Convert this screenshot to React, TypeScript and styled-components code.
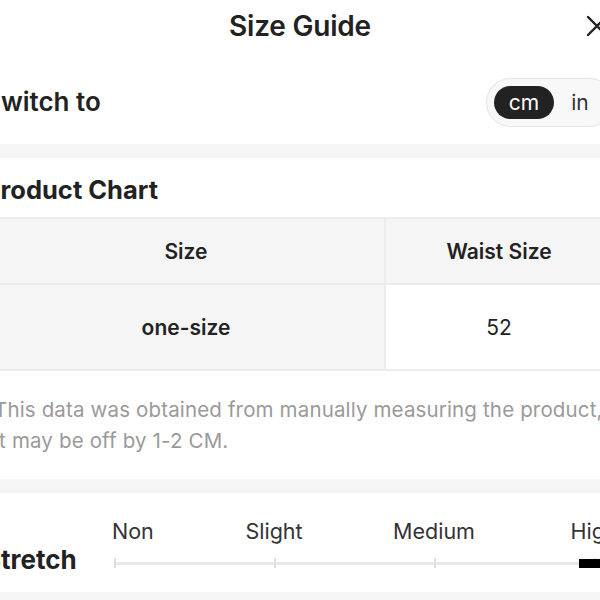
import { createGlobalStyle } from 'styled-components';
import styled from 'styled-components';

const GlobalStyle = createGlobalStyle`
  html, body {
    margin: 0;
    padding: 0;
    background: #ffffff;
    overflow: hidden;
  }
  body {
    font-family: Inter, "Noto Sans", sans-serif;
    color: #222222;
  }
`;

const Page = styled.div`
  width: 628px;
  margin-left: -14px;
  background: #ffffff;
`;

const Header = styled.header`
  display: grid;
  grid-template-columns: 1fr auto 1fr;
  align-items: center;
  height: 52px;
`;

const Title = styled.h1`
  grid-column: 2;
  margin: 0;
  font-size: 28px;
  font-weight: 600;
  letter-spacing: -0.2px;
  color: #222222;
`;

const CloseButton = styled.button`
  grid-column: 3;
  justify-self: end;
  margin-right: 4px;
  padding: 0;
  border: none;
  background: none;
  display: flex;
  color: #222222;
`;

const UnitRow = styled.div`
  display: flex;
  align-items: center;
  justify-content: space-between;
  height: 84px;
  margin-top: 8px;
`;

const Label = styled.span`
  margin-left: -2px;
  font-size: 26px;
  line-height: 32px;
  font-weight: 600;
  color: #222222;
`;

const Toggle = styled.div`
  display: flex;
  padding: 7px;
  border: 1px solid #e4e4e4;
  border-radius: 25px;
  background: #f8f8f8;
`;

const ToggleOption = styled.span<{ $active?: boolean }>`
  width: ${({ $active }) => ($active ? '60px' : '52px')};
  height: 33px;
  border-radius: 17px;
  display: flex;
  align-items: center;
  justify-content: center;
  font-size: 21px;
  background: ${({ $active }) => ($active ? '#222222' : 'transparent')};
  color: ${({ $active }) => ($active ? '#ffffff' : '#333333')};
`;

const Divider = styled.div`
  height: 14px;
  background: #f5f5f5;
`;

const Section = styled.section`
  padding-top: 16px;
`;

const SectionTitle = styled.h2`
  margin: 0 0 11px -2px;
  font-size: 25.5px;
  line-height: 32px;
  font-weight: 700;
  color: #222222;
`;

const Table = styled.table`
  width: 100%;
  border-collapse: collapse;
  table-layout: fixed;

  th, td {
    border: 2px solid #ececec;
    text-align: center;
    font-size: 21px;
    color: #222222;
    padding: 0;
  }

  th {
    height: 64px;
    background: #f5f5f5;
    font-weight: 600;
  }

  td {
    height: 84px;
    font-weight: 400;
  }

  td:first-child {
    background: #f5f5f5;
    font-weight: 600;
  }

  th:first-child, td:first-child {
    width: 396px;
  }
`;

const Note = styled.p`
  margin: 0;
  padding: 23px 0 23px 8px;
  font-size: 20.5px;
  line-height: 31px;
  letter-spacing: 0.15px;
  color: #9a9a9a;
  white-space: nowrap;
`;

const StretchRow = styled.div`
  display: flex;
  align-items: flex-start;
  height: 99px;
  box-sizing: border-box;
  padding-top: 24px;
`;

const StretchLabel = styled(Label)`
  width: 130px;
  flex: none;
  margin-top: 27px;
  font-weight: 700;
`;

const Scale = styled.div`
  position: relative;
  flex: 1;
  height: 50px;
`;

const Track = styled.div`
  position: absolute;
  left: 0;
  right: 0;
  top: 45px;
  height: 3px;
  background: #e8e8e8;
`;

const Tick = styled.span`
  position: absolute;
  top: 41px;
  width: 2px;
  height: 10px;
  background: #dedede;
`;

const ScaleLabel = styled.span<{ $first?: boolean }>`
  position: absolute;
  top: 1px;
  font-size: 21.5px;
  line-height: 26px;
  color: #333333;
  white-space: nowrap;
  transform: ${({ $first }) => ($first ? 'translateX(-2px)' : 'translateX(-50%)')};
`;

const Marker = styled.span`
  position: absolute;
  top: 42px;
  width: 30px;
  height: 9px;
  background: #000000;
  transform: translateX(-50%);
`;

const levels = ['Non', 'Slight', 'Medium', 'High'];
const selected = 3;

export default function App() {
  return (
    <>
      <GlobalStyle />
      <Page>
        <Header>
          <Title>Size Guide</Title>
          <CloseButton aria-label="Close">
            <svg width="26" height="26" viewBox="0 0 26 26" fill="none">
              <path
                d="M4 4L22 22M22 4L4 22"
                stroke="currentColor"
                strokeWidth="2.4"
                strokeLinecap="round"
              />
            </svg>
          </CloseButton>
        </Header>

        <UnitRow>
          <Label>Switch to</Label>
          <Toggle>
            <ToggleOption $active>cm</ToggleOption>
            <ToggleOption>in</ToggleOption>
          </Toggle>
        </UnitRow>

        <Divider />

        <Section>
          <SectionTitle>Product Chart</SectionTitle>
          <Table>
            <thead>
              <tr>
                <th>Size</th>
                <th>Waist Size</th>
              </tr>
            </thead>
            <tbody>
              <tr>
                <td>one-size</td>
                <td>52</td>
              </tr>
            </tbody>
          </Table>
          <Note>
            This data was obtained from manually measuring the product,
            <br />
            it may be off by 1-2 CM.
          </Note>
        </Section>

        <Divider />

        <StretchRow>
          <StretchLabel>Stretch</StretchLabel>
          <Scale>
            <Track />
            {levels.map((level, i) => (
              <Tick key={'tick' + level} style={{ left: i * 160 }} />
            ))}
            {levels.map((level, i) => (
              <ScaleLabel
                key={level}
                $first={i === 0}
                style={{ left: i * 160 }}
              >
                {level}
              </ScaleLabel>
            ))}
            <Marker style={{ left: selected * 160 }} />
          </Scale>
        </StretchRow>

        <Divider />
      </Page>
    </>
  );
}
